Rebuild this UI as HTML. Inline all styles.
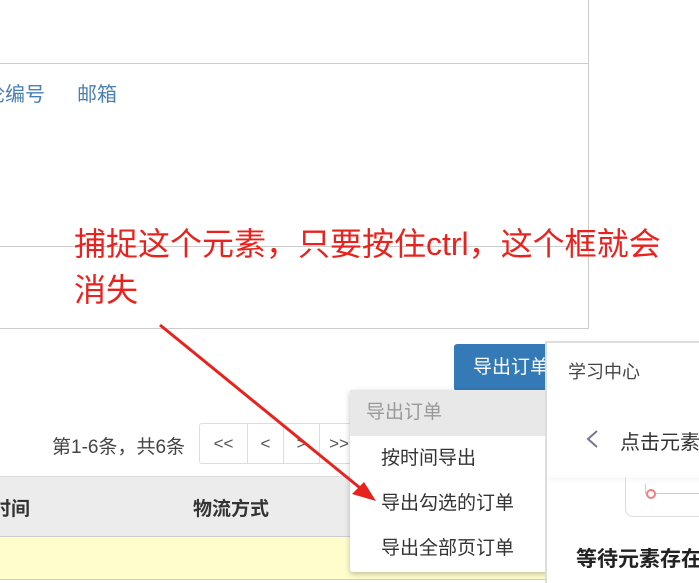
<!DOCTYPE html>
<html><head><meta charset="utf-8"><style>
*{margin:0;padding:0;box-sizing:border-box}
body{width:699px;height:583px;overflow:hidden;background:#fff;position:relative;font-family:"Liberation Sans","Noto Sans CJK SC",sans-serif;color:#333}
.a{position:absolute}
</style></head><body>
<div class="a" style="left:0;top:0;width:589px;height:329px;border-right:1px solid #ccc;border-bottom:1px solid #ccc"></div>
<div class="a" style="left:0;top:63px;width:589px;height:1px;background:#ccc"></div>
<div class="a" style="left:0;top:246px;width:589px;height:1px;background:#ccc"></div>
<div class="a" style="left:-15px;top:78px;font-size:20px;color:#4a7fb5">论编号</div>
<div class="a" style="left:77px;top:78px;font-size:20px;color:#4a7fb5">邮箱</div>
<div class="a" style="left:74px;top:221px;font-size:32px;line-height:46px;color:#e8231f;width:640px;white-space:nowrap">捕捉这个元素，只要按住ctrl，这个框就会<br>消失</div>

<div class="a" style="left:52px;top:432px;font-size:19px;color:#444">第1-6条，共6条</div>
<div class="a" style="left:199px;top:423px;width:160px;height:41px;border:1px solid #ddd;border-radius:3px;display:flex;font-size:17px;color:#555">
<div style="width:48px;border-right:1px solid #ddd;text-align:center;line-height:39px">&lt;&lt;</div>
<div style="width:36px;border-right:1px solid #ddd;text-align:center;line-height:39px">&lt;</div>
<div style="width:36px;border-right:1px solid #ddd;text-align:center;line-height:39px">&gt;</div>
<div style="width:38px;text-align:center;line-height:39px">&gt;&gt;</div></div>
<div class="a" style="left:0;top:476px;width:699px;height:61px;background:#ececec;border-top:1px solid #ddd;border-bottom:1px solid #ccc"></div>
<div class="a" style="left:-8px;top:494px;font-size:19px;font-weight:bold;color:#333">时间</div>
<div class="a" style="left:193px;top:494px;font-size:19px;font-weight:bold;color:#333">物流方式</div>
<div class="a" style="left:0;top:537px;width:699px;height:43px;background:#fffdcc;border-bottom:1px solid #ccc"></div>

<div class="a" style="left:454px;top:344px;width:100px;height:47px;background:#337ab7;border-radius:3px;color:#fff;font-size:19px;line-height:47px;padding-left:19px">导出订单</div>
<div class="a" style="left:350px;top:390px;width:200px;height:182px;background:#fff;box-shadow:0 2px 6px rgba(0,0,0,.25);border-radius:3px">
<div style="height:46px;background:#e8e8e8;color:#999;font-size:19px;line-height:46px;padding-left:16px">导出订单</div>
<div style="font-size:19px;line-height:45px;padding-left:31px;color:#333">按时间导出<br>导出勾选的订单<br>导出全部页订单</div></div>

<div class="a" style="left:545px;top:341px;width:160px;height:242px;background:#fff;border-left:2px solid #ddd;border-top:2px solid #ddd">
<div class="a" style="left:21px;top:15px;font-size:18px;color:#444">学习中心</div>
<svg class="a" style="left:38px;top:86px" width="14" height="20"><polyline points="12,2 3,10 12,18" fill="none" stroke="#778" stroke-width="2"/></svg>
<div class="a" style="left:73px;top:83px;font-size:20px;color:#333;white-space:nowrap">点击元素</div>
<div class="a" style="left:0;top:133px;width:160px;height:1px;box-shadow:0 2px 5px rgba(0,0,0,.15)"></div>
<div class="a" style="left:78px;top:134px;width:90px;height:40px;border:1px solid #ddd;border-top:none;border-radius:0 0 0 8px"></div>
<div class="a" style="left:98px;top:141px;width:1px;height:10px;background:#ccc"></div>
<div class="a" style="left:99px;top:146px;width:10px;height:10px;border:2px solid #f08080;border-radius:50%"></div>
<div class="a" style="left:109px;top:150px;width:60px;height:1px;background:#ccc"></div>
<div class="a" style="left:29px;top:200px;font-size:21px;font-weight:bold;color:#222;white-space:nowrap">等待元素存在</div>
</div>

<svg class="a" style="left:0;top:0" width="699" height="583"><line x1="160" y1="325" x2="365" y2="492" stroke="#e8231f" stroke-width="3"/><polygon points="376,501 352,494 364,482" fill="#e8231f"/></svg>
</body></html>
